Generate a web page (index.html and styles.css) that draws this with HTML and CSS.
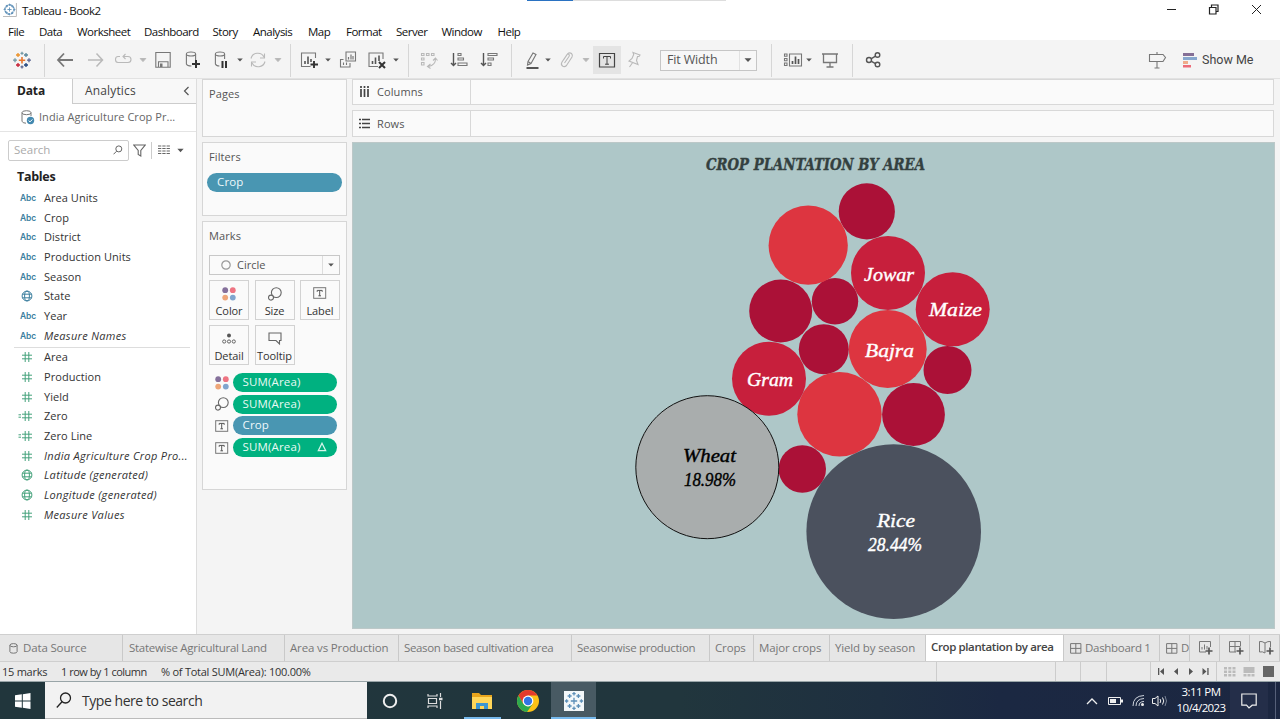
FILE: index.html
```html
<!DOCTYPE html>
<html lang="en">
<head>
<meta charset="utf-8">
<title>Tableau - Book2</title>
<link rel="stylesheet" href="styles.css">
</head>
<body>
<svg class="defs" aria-hidden="true">
  <symbol id="caret" viewBox="0 0 8 8"><path d="M1.2 2.5h5.6L4 5.6z" fill="currentColor"/></symbol>
  <symbol id="label" viewBox="0 0 14 12"><rect x=".7" y=".7" width="12" height="10.6" fill="none" stroke="#777"/><path d="M4.2 4.8V3.4h5v1.4M6.7 3.4v5.4M5.4 8.8h2.6" fill="none" stroke="#555"/></symbol>
  <symbol id="size" viewBox="0 0 14 14"><circle cx="8.3" cy="5.6" r="4.9" fill="none" stroke="#666" stroke-width="1.1"/><circle cx="3" cy="10.6" r="2.5" fill="#fafafa" stroke="#666" stroke-width="1.1"/></symbol>
  <symbol id="color" viewBox="0 0 14 14"><circle cx="3.2" cy="3.2" r="2.9" fill="#85709b"/><circle cx="10.8" cy="3.2" r="2.9" fill="#ee7482"/><circle cx="3.2" cy="10.6" r="2.9" fill="#eea679"/><circle cx="10.8" cy="10.6" r="2.9" fill="#80a5ce"/></symbol>
  <symbol id="hash" viewBox="0 0 10 10"><path d="M3.2 0v10M6.8 0v10M0 3.2h10M0 6.8h10" fill="none" stroke="currentColor" stroke-width="1"/></symbol>
  <symbol id="globe" viewBox="0 0 12 12"><g fill="none" stroke="currentColor"><circle cx="6" cy="6" r="4.9"/><ellipse cx="6" cy="6" rx="2.4" ry="4.9"/><path d="M1.4 4.2h9.2M1.4 7.8h9.2"/></g></symbol>
  <symbol id="grid" viewBox="0 0 12 11"><path d="M.6.6h10.3v9.600H.6zM5.800.6v9.600M.6 5.400h10.300" fill="none" stroke="#777"/></symbol>
  <symbol id="tableau" viewBox="0 0 20 20"><g fill="none" stroke-width="1.3"><path d="M10 7v6.4M6.8 10.2h6.4" stroke="#e8762c" stroke-width="1.6"/><path d="M6 3v4M4 5h4" stroke="#eb9129"/><path d="M14 3v4M12 5h4" stroke="#59879b"/><path d="M6 13v4M4 15h4" stroke="#c72035"/><path d="M14 13v4M12 15h4" stroke="#1f457e"/><path d="M3 8.2v4M1 10.2h4" stroke="#7199a6"/><path d="M17 8.2v4M15 10.2h4" stroke="#5b6591"/><path d="M10 1.8v3M8.5 3.3h3" stroke="#7199a6"/><path d="M10 15.4v3M8.5 16.9h3" stroke="#5b6591"/></g></symbol>
  <symbol id="tableau-blue" viewBox="0 0 20 20"><g fill="none" stroke="#5c8fb8" stroke-width="1.3"><path d="M10 6.8V13.2M6.8 10h6.4M5.6 3v4M3.6 5h4M14.4 3v4M12.4 5h4M5.6 13v4M3.6 15h4M14.4 13v4M12.4 15h4M2.6 8.3v3.4M.9 10h3.4M17.4 8.3v3.4M15.7 10h3.4M10 1v3.4M8.3 2.7h3.4M10 15.6V19M8.3 17.3h3.4"/></g></symbol>
</svg>

<header class="titlebar">
  <svg class="app-icon" width="14" height="14"><path d="M13.4 0v13.5H0" fill="none" stroke="#bbb"/><g stroke-width="2"><use href="#tableau-blue" width="13" height="13"/></g><circle cx="6.500" cy="6.500" r="4.600" fill="none" stroke="#5c8fb8" stroke-width="1.200" stroke-dasharray="2 1.600"/></svg>
  <span class="app-title">Tableau - Book2</span>
  <i class="accent"></i>
  <svg class="window-controls" width="100" height="16" fill="none" stroke="#222"><path d="M1 9.500h9M86 5l9 9M95 5l-9 9"/><path d="M43.500 7.500h6.500v6.500h-6.500zM45.500 7V5h6.500v6.500h-2" stroke-width="1.200"/></svg>
</header>
<nav class="menubar">
  <span class="m1">File</span><span class="m2">Data</span><span class="m3">Worksheet</span><span class="m4">Dashboard</span><span class="m5">Story</span><span class="m6">Analysis</span><span class="m7">Map</span><span class="m8">Format</span><span class="m9">Server</span><span class="m10">Window</span><span>Help</span>
</nav>

<div class="toolbar">
  <svg class="ic g12"><use href="#tableau" width="20" height="20"/></svg>
  <i class="sep g12"></i>
  <svg class="ic g10"><path d="M18 10H3M9 3.500L3 10l6 6.500" stroke-width="1.800"/></svg>
  <svg class="ic g10 off"><path d="M3 10h14.500M11.500 3.500l6 6.500-6 6.500" stroke-width="1.500"/></svg>
  <svg class="ic g9 off"><path d="M6 6.500H4q-2.500 0-2.500 3t2.500 3h10q3 0 3-3t-3-3H9M11.500 4L9 6.500 11.500 9"/></svg>
  <svg class="car g5 off"><use href="#caret"/></svg>
  <svg class="ic g6"><path d="M2.800 2.500h14.400v14.700H2.800z"/><path d="M5.500 17v-5.200h9.500V17" /><path d="M7 13.500h2.500V17H7z" fill="#777" stroke="none"/></svg>
  <svg class="ic g10"><ellipse cx="8" cy="4" rx="4.600" ry="2"/><path d="M3.400 4v10q.8 2 5 2M12.600 4v6"/><path d="M13 10v8M9 14h8" stroke="#333" stroke-width="2"/></svg>
  <svg class="ic g9"><ellipse cx="8" cy="4" rx="4.600" ry="2"/><path d="M3.400 4v10q.8 2 4 2M12.600 4v5"/><path d="M10.500 11v7M14 11v7" stroke="#333" stroke-width="2"/></svg>
  <svg class="car g4"><use href="#caret"/></svg>
  <svg class="ic g4 off"><path d="M3 8.500A7 7 0 0 1 16 7M17 11.500A7 7 0 0 1 4 13M16.500 3.500V8H12M3.500 16.500V12H8"/></svg>
  <svg class="car g6 off"><use href="#caret"/></svg>
  <i class="sep g8"></i>
  <svg class="ic g9"><path d="M15.500 8V3h-14v13.500h9"/><path d="M5 14v-3M8 14V6.500M11 12V9" stroke="#555" stroke-width="1.600"/><path d="M14 11v7M10.500 14.500h7.500" stroke="#333" stroke-width="1.900"/></svg>
  <svg class="car g4"><use href="#caret"/></svg>
  <svg class="ic g6"><path d="M8 2h9.500v9H8zM5.500 9.500h-3v7.500h9.500v-4M5.500 15v-2.500M8.500 15v-2.500"/><path d="M10.500 9.500V7M13 9.500V4.500M15 9.500V6" stroke-width="1.200"/></svg>
  <svg class="ic g9"><path d="M16 9V3H2v13.500h9"/><path d="M5.500 14v-3M8.500 14V7.500M12 11V5.500" stroke="#555" stroke-width="1.600"/><path d="M12 12l6 6M18 12l-6 6" stroke="#333" stroke-width="2"/></svg>
  <svg class="car g5"><use href="#caret"/></svg>
  <i class="sep g8"></i>
  <svg class="ic g9 off"><path d="M3.500 3.500h2.500v2H3.500zM8.500 3.500h2.500v2H8.500zM13.500 3.500H16v2h-2.500zM3.500 8H6v2H3.500zM3.500 12.500H6v2.500H3.500zM17.500 9q0 6-7 7.500M15 10.500L17.500 8l2 2.500M12.500 14L9.500 16.500l3 2"/></svg>
  <svg class="ic g11"><path d="M4.500 3v12.500M2 13l2.500 2.500L7 13" stroke-width="1.400" stroke="#555"/><path d="M9 3.500h3v2H9zM9 8h5.500v2H9zM9 13h9v2.500H9z"/></svg>
  <svg class="ic g10"><path d="M4.500 3v12.500M2 13l2.500 2.500L7 13" stroke-width="1.400" stroke="#555"/><path d="M9 3.500h9v2H9zM9 8h5.500v2H9zM9 13h3v2.500H9z"/></svg>
  <i class="sep g12"></i>
  <svg class="ic g10"><path d="M6 11.500L11 3l3 1.500-5 9-3.500 1.500zM6 11.500l3 2"/><path d="M4.500 18h12" stroke="#555" stroke-width="2"/></svg>
  <svg class="car g2"><use href="#caret"/></svg>
  <svg class="ic g5 off"><path d="M6.500 10l4-6q2-2 4-.500 1.500 1.500.5 3.500l-5.500 8.500q-2 2-4 .500t-.5-4l5-7.500q1-1 2 0 .8.800 0 2l-4.500 6.500"/></svg>
  <svg class="car g5 off"><use href="#caret"/></svg>
  <span class="toggle g3"><svg width="28" height="28" fill="none" stroke="#444"><path d="M6.500 7.500h15v13.500h-15z" stroke-width="1.200"/><path d="M10.500 12.500v-2h7v2M14 10.500v8M12 18.200h4"/></svg></span>
  <svg class="ic g3 off"><path d="M9 2.500l7 2.500-1 1.500H13.500L12.500 10.500l1.500 4-9-3.500 3-2.500 1.700-4zM8.500 12.700L5.500 17"/></svg>
  <span class="select g16">Fit Width<i></i><svg class="car"><use href="#caret" width="10" height="10"/></svg></span>
  <i class="sep g14"></i>
  <svg class="ic g11"><path d="M1.500 4h2.500v2.300H1.500zM1.500 8.500h2.500v2.300H1.500zM1.500 13h2.500v2.500H1.500zM6.500 4h12v12h-12z"/><path d="M9.500 14v-3M12.500 14V6.500M15.500 14V9" stroke-width="1.700" stroke="#555"/></svg>
  <svg class="car g2"><use href="#caret"/></svg>
  <svg class="ic g7"><path d="M2 4h16M3.500 4v8.500h13V4M10 12.500V17M6.500 17h7" stroke-width="1.300"/></svg>
  <i class="sep g12"></i>
  <svg class="ic g10"><g stroke="#555" stroke-width="1.400"><circle cx="6" cy="10" r="2.500"/><circle cx="14.500" cy="5" r="2.300"/><circle cx="14.500" cy="14.500" r="2.300"/><path d="M8 8.800l4.500-2.600M8 11.200l4.500 2.400"/></g></svg>
  <svg class="ic guide"><path d="M2.500 4.500H16l2.500 3-2.500 4H2.500zM10 2v2.500M10 11.500V18M7.500 18h5"/></svg>
  <svg class="bars" width="14" height="16"><path d="M0 0h11v3H0z" fill="#856f96"/><path d="M0 4h14v3H0z" fill="#87a7ce"/><path d="M0 8h5v3H0z" fill="#efab8a"/><path d="M0 12h8v2.500H0z" fill="#ec6b78"/></svg>
  <span class="show-me">Show Me</span>
</div>

<main class="workspace">
  <aside class="data-pane">
    <div class="pane-tabs"><b>Data</b><span>Analytics<svg width="7" height="10"><path d="M5.500 1L1.500 5l4 4" fill="none" stroke="#555" stroke-width="1.200"/></svg></span></div>
    <div class="source"><svg width="14" height="15" fill="none" stroke="#777"><ellipse cx="5.500" cy="2.700" rx="4.500" ry="2"/><path d="M1 2.700v8.500q.5 2 4 2M10 2.700V6"/><circle cx="9.500" cy="10.500" r="3.700" fill="#4389b0" stroke="none"/><path d="M7.600 10.500l1.400 1.400 2.400-2.500" stroke="#fff"/></svg>India Agriculture Crop Pr...</div>
    <div class="search-row">
      <div class="search">Search<svg width="10" height="10" fill="none" stroke="#666"><circle cx="5.800" cy="3.900" r="3"/><path d="M3.600 6.200L.5 9.300"/></svg></div>
      <svg class="funnel" width="13" height="13"><path d="M.8 1h11.400L7.800 6.500V12L5.200 10.500v-4z" fill="none" stroke="#666" stroke-width="1.100"/></svg>
      <i></i>
      <svg class="list" width="12" height="10"><path d="M0 1h12M0 3.500h12M0 6h12M0 8.500h12" stroke="#666" stroke-width="1.200" stroke-dasharray="3.300 1"/></svg>
      <svg class="car"><use href="#caret" width="9" height="9"/></svg>
    </div>
    <h2>Tables</h2>
    <ul class="fields dims">
      <li><em>Abc</em>Area Units</li><li><em>Abc</em>Crop</li><li><em>Abc</em>District</li><li><em>Abc</em>Production Units</li><li><em>Abc</em>Season</li>
      <li><svg class="fi"><use href="#globe" width="12" height="12"/></svg>State</li><li><em>Abc</em>Year</li><li class="it"><em>Abc</em>Measure Names</li>
    </ul>
    <ul class="fields meas">
      <li><svg class="fi"><use href="#hash" x="1" y="1" width="10" height="10"/></svg>Area</li>
      <li><svg class="fi"><use href="#hash" x="1" y="1" width="10" height="10"/></svg>Production</li>
      <li><svg class="fi"><use href="#hash" x="1" y="1" width="10" height="10"/></svg>Yield</li>
      <li><svg class="fi"><path d="M-2.500 4.800h2.500M-2.500 7.200h2.500" stroke="currentColor"/><use href="#hash" x="1" y="1" width="10" height="10"/></svg>Zero</li>
      <li><svg class="fi"><path d="M-2.500 4.800h2.500M-2.500 7.200h2.500" stroke="currentColor"/><use href="#hash" x="1" y="1" width="10" height="10"/></svg>Zero Line</li>
      <li class="it"><svg class="fi"><use href="#hash" x="1" y="1" width="10" height="10"/></svg>India Agriculture Crop Pro...</li>
      <li class="it"><svg class="fi"><use href="#globe" width="12" height="12"/></svg>Latitude (generated)</li>
      <li class="it"><svg class="fi"><use href="#globe" width="12" height="12"/></svg>Longitude (generated)</li>
      <li class="it"><svg class="fi"><use href="#hash" x="1" y="1" width="10" height="10"/></svg>Measure Values</li>
    </ul>
  </aside>

  <section class="cards">
    <div class="card pages"><h3>Pages</h3></div>
    <div class="card filters"><h3>Filters</h3><div class="pill blue">Crop</div></div>
    <div class="card marks"><h3>Marks</h3>
      <div class="mark-type"><svg width="10" height="10"><circle cx="5" cy="5" r="4.200" fill="none" stroke="#999" stroke-width="1.200"/></svg>Circle<i></i><svg class="car"><use href="#caret" width="8" height="8"/></svg></div>
      <div class="mark-buttons">
        <div><svg width="14" height="14"><use href="#color"/></svg>Color</div>
        <div><svg width="14" height="14"><use href="#size"/></svg>Size</div>
        <div><svg width="14" height="14"><use href="#label" width="14" height="12"/></svg>Label</div>
        <div><svg width="14" height="14"><circle cx="7" cy="3.500" r="2" fill="#555"/><g fill="none" stroke="#666"><circle cx="2.200" cy="9.500" r="1.600"/><circle cx="7" cy="9.500" r="1.600"/><circle cx="11.800" cy="9.500" r="1.600"/></g></svg>Detail</div>
        <div><svg width="14" height="14"><path d="M1 1h12v7.500h-1.500V12L8 8.500H1z" fill="none" stroke="#666" stroke-width="1.100"/></svg>Tooltip</div>
      </div>
      <div class="shelf"><svg width="14" height="14"><use href="#color"/></svg><div class="pill">SUM(Area)</div></div>
      <div class="shelf"><svg width="14" height="14"><use href="#size"/></svg><div class="pill">SUM(Area)</div></div>
      <div class="shelf"><svg width="14" height="12"><use href="#label"/></svg><div class="pill blue">Crop</div></div>
      <div class="shelf"><svg width="14" height="12"><use href="#label"/></svg><div class="pill">SUM(Area)<svg width="10" height="10"><path d="M5 1.200L8.700 8.700H1.300z" fill="none" stroke="#d8f5ea" stroke-width="1.200"/></svg></div></div>
    </div>
  </section>

  <section class="view">
    <div class="axis"><span><svg width="11" height="12"><path d="M2 0v2M5.500 0v2M9 0v2M2 3v8M5.500 3v8M9 3v8" stroke="#444" stroke-width="1.700"/></svg>Columns</span></div>
    <div class="axis rows"><span><svg width="11" height="11"><path d="M0 1.500h2M3 1.500h8M0 5.500h2M3 5.500h8M0 9.500h2M3 9.500h8" stroke="#444" stroke-width="1.700"/></svg>Rows</span></div>
    <svg class="chart" viewBox="352 142 923 487">
      <text class="chart-title" x="706" y="170.300" textLength="219" lengthAdjust="spacingAndGlyphs">CROP PLANTATION BY AREA</text>
      <g class="c-dark"><circle cx="866.800" cy="211.400" r="28.100"/><circle cx="780.700" cy="311" r="31.500"/><circle cx="835" cy="301.300" r="23.200"/><circle cx="823.800" cy="349.200" r="25"/><circle cx="947.500" cy="370" r="24"/><circle cx="913.500" cy="414.500" r="31.400"/><circle cx="802.300" cy="469" r="23.700"/></g>
      <g class="c-light"><circle cx="808.200" cy="245.200" r="39.600"/><circle cx="887.700" cy="348.900" r="39"/><circle cx="839.500" cy="414.200" r="42.200"/></g>
      <g class="c-mid"><circle cx="888" cy="273" r="37"/><circle cx="952.700" cy="309.300" r="37"/><circle cx="769" cy="378.700" r="37"/></g>
      <circle cx="707.300" cy="467.200" r="71.500" fill="#a9adad" stroke="#111"/>
      <circle cx="893.700" cy="531.600" r="87.300" fill="#4b515e"/>
      <g class="names">
        <text x="864" y="280.500" textLength="50" lengthAdjust="spacingAndGlyphs">Jowar</text>
        <text x="929" y="315.500" textLength="53" lengthAdjust="spacingAndGlyphs">Maize</text>
        <text x="865" y="356.500" textLength="49" lengthAdjust="spacingAndGlyphs">Bajra</text>
        <text x="747" y="385.500" textLength="46" lengthAdjust="spacingAndGlyphs">Gram</text>
        <text x="877" y="526.500" textLength="38" lengthAdjust="spacingAndGlyphs">Rice</text>
        <text x="868" y="550.500" textLength="54" lengthAdjust="spacingAndGlyphs">28.44%</text>
        <text class="black" x="683" y="461.800" textLength="53" lengthAdjust="spacingAndGlyphs">Wheat</text>
        <text class="black" x="684" y="485.800" textLength="52" lengthAdjust="spacingAndGlyphs">18.98%</text>
      </g>
    </svg>
  </section>
</main>

<nav class="sheets">
  <span class="s1"><svg width="9" height="11" fill="none" stroke="#777"><ellipse cx="4.500" cy="2.200" rx="3.600" ry="1.600"/><path d="M.9 2.200v6.500q0 1.500 3.600 1.500t3.600-1.500V2.200"/></svg>Data Source</span>
  <span class="s2">Statewise Agricultural Land</span><span class="s3">Area vs Production</span><span class="s4">Season based cultivation area</span><span class="s5">Seasonwise production</span><span class="s6">Crops</span><span class="s7">Major crops</span><span class="s8">Yield by season</span><span class="s9 active">Crop plantation by area</span>
  <span class="s10"><svg width="12" height="11"><use href="#grid"/></svg>Dashboard 1</span><span class="s11"><svg width="12" height="11"><use href="#grid"/></svg>D</span>
  <span class="add"><svg width="16" height="16" fill="none" stroke="#777"><path d="M12.500 7V1.500H1.500v10.500H8M4 9.500V7M6.500 9.500V4.500M9 9.500V6"/><path d="M11 7.500v7M7.500 11h7" stroke="#555" stroke-width="1.700"/></svg></span>
  <span class="add"><svg width="16" height="16" fill="none" stroke="#777"><path d="M12.500 6V1.500H1.500v10.500H8M7 1.500V12M1.500 6.500h11"/><path d="M12 7.500v7M8.500 11h7" stroke="#555" stroke-width="1.700"/></svg></span>
  <span class="add"><svg width="16" height="16" fill="none" stroke="#777"><path d="M7 3Q4 1 1.500 1.500V12q3-.8 5.500 1V3q3-2 5.500-1.500V7"/><path d="M12 7.500v7M8.500 11h7" stroke="#555" stroke-width="1.700"/></svg></span>
</nav>
<footer class="status">
  <span class="t1">15 marks</span><span class="t2">1 row by 1 column</span><span class="t3">% of Total SUM(Area): 100.00%</span>
  <i class="b1"></i><i class="b2"></i><i class="b3"></i><i class="b4"></i>
  <div class="pager"><svg width="66" height="19" fill="#555"><path d="M8 6h1.300v7H8zM14 6v7l-4-3.500zM28 6v7l-4-3.500zM39 6v7l4-3.500zM52.500 6v7l4-3.500zM57.300 6h1.300v7h-1.300z"/></svg></div>
  <div class="modes"><svg width="62" height="19"><path d="M8 5h3v2.500H8zM12.300 5h3v2.500h-3zM16.500 5h3v2.500h-3zM8 8.500h3v2.500H8zM12.300 8.500h3v2.500h-3zM16.500 8.500h3v2.500h-3zM8 12h3v2.500H8zM12.300 12h3v2.500h-3zM16.500 12h3v2.500h-3zM27.500 5h11v6h-11zM27.500 12h3v2.500h-3zM31.500 12h3v2.500h-3zM35.500 12h3v2.500h-3z" fill="#bbb"/><path d="M47 4h11v11H47z" fill="#666"/></svg></div>
</footer>

<footer class="taskbar">
  <div class="start"><svg width="16" height="16" fill="#fff"><path d="M0 2.300L6.800 1.300v6.300H0zM7.800 1.200L15.500 0v7.600H7.800zM0 8.500h6.800v6.300L0 13.800zM7.800 8.500h7.700V16l-7.700-1.200z"/></svg></div>
  <div class="tb-search"><svg width="16" height="17" fill="none" stroke="#222" stroke-width="1.300"><circle cx="9.500" cy="6" r="5"/><path d="M6 9.800L.8 15.500"/></svg>Type here to search</div>
  <div class="tb-app"><svg width="16" height="16"><circle cx="8" cy="8" r="6.200" fill="none" stroke="#eee" stroke-width="2"/></svg></div>
  <div class="tb-app view-switch"><svg width="16" height="16" fill="none" stroke="#ddd" stroke-width="1.200"><path d="M1 1v2h9V1M1 15v-2h9v2M1.500 5.500h8v5h-8zM13.500 0v4M13.500 8v8"/><path d="M12 6h3.500" stroke-width="2.500"/></svg></div>
  <div class="tb-app folder"><svg width="22" height="20"><path d="M1 2h7l2 2h11v14H1z" fill="#e8a51c"/><path d="M1 6h20v12H1z" fill="#ffd659"/><path d="M5 18v-6h12v6h-4v-3H9v3z" fill="#3c96d2"/></svg><i></i></div>
  <div class="tb-app"><svg width="24" height="24" viewBox="0 0 24 24"><circle cx="12" cy="12" r="11" fill="#fbc116"/><path d="M2.500 6.500A11 11 0 0 1 21.500 6.500H12L7.200 14.700z" fill="#e33b2e"/><path d="M2.500 6.500A11 11 0 0 0 11 23L16.800 14.800 12 17.500 7.200 14.700z" fill="#2da94f"/><circle cx="12" cy="12" r="5.400" fill="#fff"/><circle cx="12" cy="12" r="4.200" fill="#3275e4"/></svg></div>
  <div class="tb-app current"><svg width="20" height="20"><path d="M0 0h20v20H0z" fill="#f3f7f9"/><use href="#tableau-blue" width="20" height="20"/></svg><i></i></div>
  <svg class="tray" width="84" height="20" fill="none" stroke="#eee"><path d="M1 13l5-5 5 5" stroke-width="1.300"/><path d="M22.500 6.500h12v7h-12z"/><path d="M24 8h6v4h-6zM35 8.500h2v3h-2z" fill="#eee" stroke="none"/><g stroke="#cdd3dc"><path d="M47 15q0-10 11-10.500M50 15q0-7 8-7.500M53 15q0-4.500 5-4.500"/></g><circle cx="56.500" cy="13.500" r="1.500" fill="#eee" stroke="none"/><path d="M66.500 7.500H69L72 5v10l-3-2.500h-2.500zM74 8q1.500 2 0 4M76.500 6.500q2.500 3.500 0 7"/><path d="M79 5q3 5 0 10" stroke="#7b8597"/></svg>
  <div class="clock"><span>3:11 PM</span><span>10/4/2023</span></div>
  <div class="notice"><svg width="16" height="16" fill="none" stroke="#eee" stroke-width="1.200"><path d="M.8 1h14.400v11.200h-4L8 15l-2.500-2.800H.8z"/></svg></div>
  <i class="peek"></i>
</footer>
</body>
</html>
```
FILE: styles.css
```css
* { box-sizing: border-box; }
body { margin: 0; width: 1280px; height: 719px; overflow: hidden; background: #f4f4f4; color: #333; font: 12px/16px "Open Sans", "Noto Sans", sans-serif; }
h2, h3, ul { margin: 0; padding: 0; font-weight: normal; list-style: none; }
i { font-style: normal; }
svg { flex: none; display: block; }
span, div, li { white-space: nowrap; }
.defs { position: absolute; width: 0; height: 0; }

.titlebar { position: relative; display: flex; height: 20px; background: #fff; padding: 3px 0 0 3px; }
.app-title { margin-left: 5px; font-size: 11.5px; letter-spacing: -.5px; color: #111; line-height: 16px; }
.accent { position: absolute; left: 527px; top: 0; width: 199px; height: 1px; background: linear-gradient(90deg, #2a72c2 46px, #ddd 46px); }
.window-controls { position: absolute; left: 1166px; top: 0; }
.menubar { display: flex; height: 20px; padding-left: 8px; background: #fff; font-size: 11.5px; letter-spacing: -.5px; line-height: 23px; color: #111; }
.m1 { width: 31px; } .m2 { width: 38px; } .m3 { width: 67px; } .m4 { width: 68.5px; } .m5 { width: 40.5px; } .m6 { width: 55px; } .m7 { width: 38px; } .m8 { width: 50px; } .m9 { width: 45.5px; } .m10 { width: 56px; }

.toolbar { display: flex; align-items: center; height: 39px; padding-top: 2px; border-bottom: 1px solid #e2e2e2; background: #f4f4f4; color: #555; }
.ic { width: 20px; height: 20px; fill: none; stroke: #777; stroke-width: 1.1; }
.off { stroke: #b9b9b9; color: #b5b5b5; }
.car { width: 8px; height: 8px; overflow: visible; }
.sep { flex: none; width: 1px; height: 33px; background: #d6d6d6; }
.g2 { margin-left: 2px; } .g3 { margin-left: 3px; } .g4 { margin-left: 4px; } .g5 { margin-left: 5px; } .g6 { margin-left: 6px; } .g7 { margin-left: 7px; } .g8 { margin-left: 8px; } .g9 { margin-left: 9px; } .g10 { margin-left: 10px; } .g11 { margin-left: 11px; } .g12 { margin-left: 12px; } .g14 { margin-left: 14px; } .g16 { margin-left: 16px; }
.toggle { width: 28px; height: 28px; background: #e4e4e4; }
.select { display: flex; align-items: center; width: 97px; height: 21px; padding-left: 6px; border: 1px solid #c6c6c6; color: #555; font-size: 12.5px; letter-spacing: -.15px; background: #f7f7f7; }
.select i { width: 1px; height: 19px; margin-left: auto; background: #e2e2e2; }
.select .car { width: 10px; height: 10px; margin: 0 3px; }
.guide { margin-left: auto; }
.bars { margin: 1px 5px 0 16px; }
.show-me { width: 78px; font: 12.5px/16px Roboto, sans-serif; color: #444; }

.workspace { display: flex; height: 555px; }
.data-pane { width: 197px; background: #fff; border-right: 1px solid #ddd; color: #333; }
.pane-tabs { display: flex; height: 25px; }
.pane-tabs b { width: 72px; padding: 4px 0 0 17px; font-size: 12px; letter-spacing: -.15px; color: #222; }
.pane-tabs span { display: flex; flex: 1; align-items: center; justify-content: space-between; padding: 0 6px 0 12px; background: #f8f8f8; border-left: 1px solid #ccc; border-bottom: 1px solid #ccc; font-size: 12px; color: #444; letter-spacing: .15px; }
.source { display: flex; align-items: center; height: 28px; padding: 0 0 2px 21px; border-bottom: 1px solid #e4e4e4; color: #666; font-size: 11px; letter-spacing: .05px; }
.source svg { margin: 2px 4px 0 0; }
.search-row { display: flex; align-items: center; height: 22px; margin: 7px 0 0 8px; }
.search { display: flex; align-items: center; justify-content: space-between; width: 121px; height: 21px; padding: 0 5px; border: 1px solid #ccc; border-radius: 2px; color: #aaa; font-size: 11.5px; }
.funnel { margin-left: 4px; }
.search-row i { width: 1px; height: 17px; margin: 0 6px 0 5px; background: #ccc; }
.search-row .car { margin-left: 6px; color: #555; }
h2 { margin: 8px 0 3px 17px; font-size: 12.5px; line-height: 16px; font-weight: bold; letter-spacing: -.3px; color: #222; }
.fields li { display: flex; align-items: center; height: 19.7px; padding-left: 20px; font-size: 11px; letter-spacing: .05px; }
.fields em { width: 24px; color: #3c7f9f; font: 600 8.5px Inter, sans-serif; letter-spacing: -.1px; }
.fi { width: 12px; height: 12px; margin: 0 11px 0 1px; color: #3c7f9f; overflow: visible; }
.meas .fi { color: #45a27c; }
.meas { margin: 1px 6px 0 14px; border-top: 1px solid #ddd; }
.meas li { padding-left: 6px; }
.fields .it { font-style: italic; letter-spacing: .32px; }

.cards { width: 155px; padding-left: 5px; background: #f4f4f4; }
.card { width: 145px; background: #fafafa; border: 1px solid #d6d6d6; padding: 6px 0 0 6px; }
.card h3 { height: 16px; font-size: 11px; line-height: 16px; color: #555; letter-spacing: .1px; }
.pages { height: 58px; margin-bottom: 5px; }
.filters { height: 74px; margin-bottom: 5px; }
.marks { height: 269px; }
.pill { display: flex; align-items: center; justify-content: space-between; width: 104px; height: 19px; padding: 0 10px 1px; border-radius: 10px; background: #00b180; color: #e8faf4; font-size: 11.5px; letter-spacing: .15px; }
.blue { background: #4996b2; color: #eef8fb; }
.filters .pill { width: 135px; margin: 8px 0 0 -2px; }
.mark-type { display: flex; align-items: center; width: 131px; height: 20px; margin-top: 11px; padding-left: 11px; border: 1px solid #c8c8c8; font-size: 11px; color: #555; }
.mark-type > svg:first-child { margin-right: 6px; }
.mark-type i { width: 1px; height: 18px; margin-left: auto; background: #ddd; }
.mark-type .car { margin: 0 4px; }
.mark-buttons { display: grid; grid-template-columns: repeat(3, 40px); gap: 5px 5.5px; height: 85px; margin: 5px 0 7px; }
.mark-buttons div { display: flex; flex-direction: column; align-items: center; height: 40px; padding-top: 6px; border: 1px solid #d2d2d2; font-size: 11px; line-height: 18px; letter-spacing: -.1px; gap: 1px; }
.shelf { display: flex; align-items: center; height: 21.6px; padding-left: 6px; }
.shelf > svg { margin-right: 3.500px; }

.view { width: 923px; }
.axis { width: 922px; height: 26px; border: 1px solid #d8d8d8; background: #fafafa; margin-bottom: 5px; }
.axis span { display: flex; align-items: center; width: 118px; height: 24px; padding-left: 6px; border-right: 1px solid #d8d8d8; font-size: 11px; letter-spacing: .1px; color: #555; }
.axis svg { margin-right: 7px; }
.rows { height: 27px; } .rows span { height: 25px; }
.chart { width: 923px; height: 487px; background: #aec7c8; box-shadow: inset 0 0 0 1px #bcc8c8; }
.chart-title { font: italic bold 17.5px "DejaVu Serif Condensed", "DejaVu Serif", serif; fill: #33403f; stroke: #33403f; stroke-width: .4px; }
.c-dark { fill: #ab1137; } .c-light { fill: #dd3540; } .c-mid { fill: #c71f3c; }
.names { font: italic 19px "Liberation Serif", serif; fill: #fff; stroke: #fff; stroke-width: .4px; }
.names .black { fill: #000; stroke: #000; }

.sheets { display: flex; height: 28px; border-top: 1px solid #cfcfcf; border-bottom: 1px solid #cfcfcf; background: #e6e6e6; color: #777; font-size: 11.5px; letter-spacing: -.15px; }
.sheets span { display: flex; align-items: center; flex: none; overflow: hidden; padding-left: 6px; border-right: 1px solid #c9c9c9; }
.sheets .active { background: #fff; color: #444; font-weight: 600; letter-spacing: -.38px; padding: 0 0 2px 5px; }
.s1 { width: 123px; } .s1 svg { margin: 0 5px 0 3px; }
.s2 { width: 162px; } .s3 { width: 114px; } .s4 { width: 173px; } .s5 { width: 138px; }
.sheets .s3, .sheets .s4, .sheets .s5, .sheets .s6, .sheets .s7, .sheets .s8 { padding-left: 5px; }
.sheets .s2 { letter-spacing: -.28px; } .sheets .s4 { letter-spacing: -.35px; } .sheets .s5 { letter-spacing: -.3px; } .sheets .s10 { letter-spacing: -.3px; }
.s6 { width: 44px; } .s7 { width: 76px; } .s8 { width: 96px; } .s9 { width: 138px; } .s10 { width: 96px; } .s11 { width: 30px; }
.s10 svg, .s11 svg { margin-right: 3px; }
.sheets .add { width: 30px; padding-left: 8px; }

.status { display: flex; height: 20px; background: #eaeaea; border-bottom: 1px solid #99a5a8; color: #333; font-size: 11px; line-height: 20px; letter-spacing: -.25px; }
.t1 { width: 59px; padding-left: 2px; } .t2 { width: 102px; padding-left: 2px; } .t3 { width: 775px; }
.t2 { letter-spacing: -.5px; }
.status i { flex: none; border-left: 1px solid #ccc; }
.b1 { width: 119px; } .b2 { width: 25px; } .b3 { width: 26px; } .b4 { width: 44px; }
.pager { width: 66px; border-left: 1px solid #ccc; }
.pager svg { margin-left: -1px; }
.modes { width: 64px; border-left: 1px solid #ccc; }
.modes svg { margin-left: -1px; }

.taskbar { display: flex; align-items: center; height: 37px; background: linear-gradient(90deg, #21363c 0, #21363d 680px, #1e2f40 880px, #1b2842 1000px, #1c2741 1280px); color: #fff; }
.start { display: flex; justify-content: center; align-items: center; width: 45px; height: 37px; }
.tb-search { display: flex; align-items: center; width: 322px; height: 37px; padding: 1px 0 0 11px; background: #f2f2f2; border-bottom: 1px solid #bbb; color: #333; font-size: 14px; letter-spacing: -.45px; }
.tb-search svg { margin-right: 10px; }
.tb-app { position: relative; display: flex; align-items: center; justify-content: center; width: 46px; height: 37px; }
.view-switch { padding-right: 2px; }
.tb-app i { position: absolute; left: 5px; right: 4px; bottom: 0; height: 2px; background: #76b9ed; }
.current { width: 45px; background: #485a63; }
.current i { left: 0; right: 0; }
.tray { margin-left: 490px; }
.clock { display: flex; flex-direction: column; align-items: center; width: 52px; margin: -1px 0 0 5px; font-size: 11.5px; line-height: 16.5px; letter-spacing: -.6px; }
.notice { display: flex; align-items: center; justify-content: center; width: 38px; height: 37px; margin-left: 3px; background: #242e49; }
.peek { width: 1px; height: 37px; margin-left: 7px; background: #566079; }
```
